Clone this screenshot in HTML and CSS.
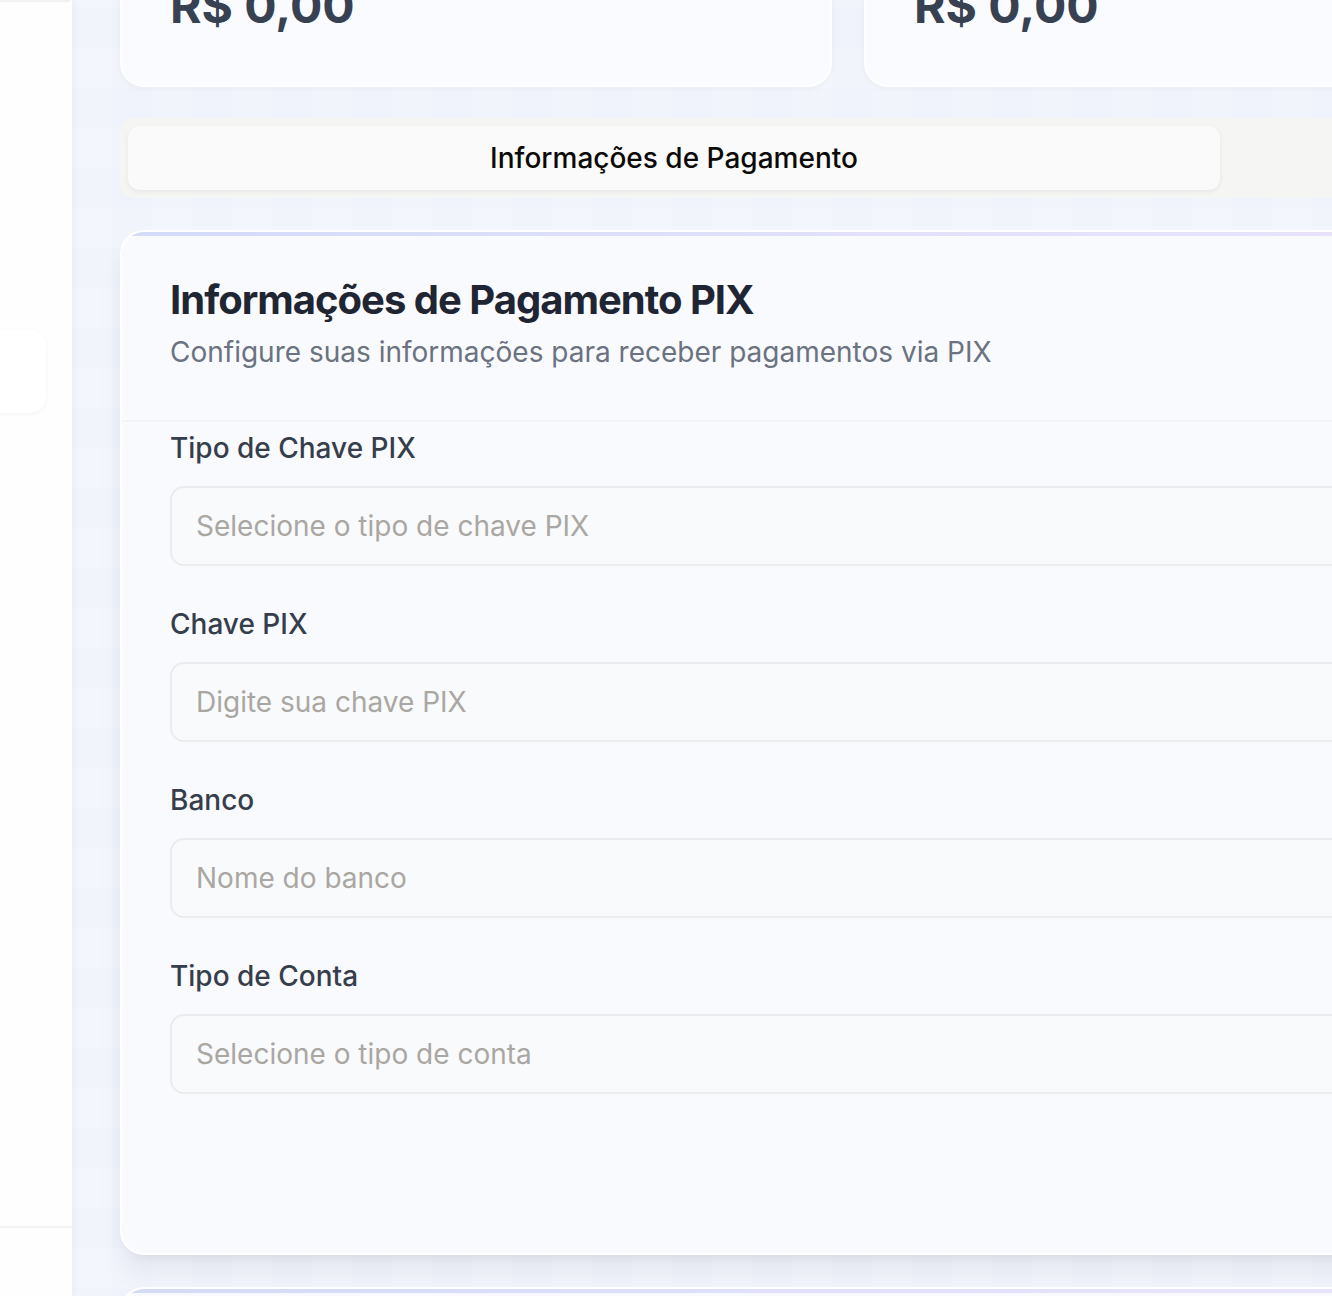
FILE: index.html
```html
<!DOCTYPE html>
<html lang="pt-BR">
<head>
<meta charset="utf-8">
<title>Informações de Pagamento</title>
<link rel="stylesheet" href="styles.css">
</head>
<body>
<div class="app">
  <aside class="sidebar">
    <div class="side-top"></div>
    <div class="side-nav">
      <div class="side-card"></div>
    </div>
    <div class="side-foot"></div>
  </aside>
  <main class="main">
    <div class="content">
      <section class="stats">
        <div class="stat-card"><div class="stat-value">R$ 0,00</div></div>
        <div class="stat-card"><div class="stat-value">R$ 0,00</div></div>
      </section>
      <div class="tabs">
        <div class="tab active">Informações de Pagamento</div>
        <div class="tab"></div>
      </div>
      <section class="card">
        <header class="card-head">
          <h2 class="card-title">Informações de Pagamento PIX</h2>
          <p class="card-desc">Configure suas informações para receber pagamentos via PIX</p>
        </header>
        <div class="card-body">
          <div class="field">
            <label class="label">Tipo de Chave PIX</label>
            <div class="input placeholder">Selecione o tipo de chave PIX</div>
          </div>
          <div class="field">
            <label class="label">Chave PIX</label>
            <div class="input placeholder">Digite sua chave PIX</div>
          </div>
          <div class="field">
            <label class="label">Banco</label>
            <div class="input placeholder">Nome do banco</div>
          </div>
          <div class="field">
            <label class="label">Tipo de Conta</label>
            <div class="input placeholder">Selecione o tipo de conta</div>
          </div>
        </div>
      </section>
      <section class="card next-card"></section>
    </div>
  </main>
</div>
</body>
</html>
```

FILE: styles.css
```css
* { box-sizing: border-box; }
html, body { margin: 0; padding: 0; }
body {
  font-family: Inter, "Noto Sans", "Liberation Sans", sans-serif;
  width: 1332px;
  height: 1296px;
  overflow: hidden;
  background: #f1f4fb;
}
.app {
  display: flex;
  height: 1296px;
  overflow: hidden;
}
.sidebar {
  flex: none;
  width: 72px;
  height: 1296px;
  background: #fefefe;
  display: flex;
  flex-direction: column;
  box-shadow: 2px 0 8px rgba(30, 40, 80, 0.05);
  position: relative;
  z-index: 2;
}
.side-top {
  height: 2px;
  margin-right: 2px;
  background: #f1f2f4;
}
.side-nav {
  flex: 1;
  padding-top: 328px;
}
.side-card {
  width: 66px;
  height: 83px;
  margin-left: -20px;
  background: #ffffff;
  border-radius: 16px;
  box-shadow: 0 1px 4px rgba(0, 0, 0, 0.05);
}
.side-foot {
  height: 70px;
  border-top: 2px solid #f3f4f6;
}
.main {
  flex: none;
  width: 2400px;
  height: 1296px;
  padding-left: 48px;
  background-color: #f1f4fb;
  background-image:
    linear-gradient(90deg, rgba(255, 255, 255, 0.14) 50%, rgba(255, 255, 255, 0) 50%),
    linear-gradient(rgba(120, 150, 230, 0.015) 50%, rgba(120, 150, 230, 0) 50%);
  background-size: 80px 80px, 80px 80px;
  background-position: 0 8px, 0 8px;
}
.content {
  width: 2200px;
  margin-top: -68px;
}
.stats {
  display: grid;
  grid-template-columns: 712px 712px;
  gap: 32px;
}
.stat-card {
  border: 2px solid rgba(255, 255, 255, 0.8);
  border-radius: 24px;
  background: #f9fbfe;
  padding: 48px 48px 55px;
  box-shadow: 0 2px 6px rgba(20, 30, 60, 0.04);
}
.stat-value {
  font-size: 48px;
  line-height: 48px;
  font-weight: 700;
  color: #374151;
}
.tabs {
  margin-top: 31px;
  height: 80px;
  padding: 8px;
  border-radius: 14px;
  background: #f5f5f3;
  display: grid;
  grid-template-columns: 1fr 1fr;
}
.tab {
  height: 64px;
  border-radius: 12px;
  display: flex;
  align-items: center;
  justify-content: center;
  font-size: 28px;
  font-weight: 500;
  color: #0c0a09;
}
.tab.active {
  background: #fafafa;
  box-shadow: 0 2px 5px rgba(0, 0, 0, 0.06);
}
.card {
  margin-top: 32px;
  position: relative;
  overflow: hidden;
  border: 2px solid rgba(255, 255, 255, 0.9);
  border-radius: 24px;
  background: #f9fafd;
  box-shadow: 0 20px 30px -6px rgba(20, 30, 60, 0.08), 0 8px 12px -8px rgba(20, 30, 60, 0.08);
}
.card::before {
  content: "";
  position: absolute;
  left: 0;
  right: 0;
  top: 0;
  height: 4px;
  background: linear-gradient(90deg, #d3dbf7 0%, #e2e1f9 35%, #ebe4fa 70%, #ede4f9 100%);
}
.card-head {
  padding: 48px 48px 48px;
  border-bottom: 2px solid #f3f4f8;
}
.card-title {
  margin: 0;
  font-size: 40px;
  line-height: 40px;
  font-weight: 700;
  letter-spacing: -0.025em;
  color: #1f2532;
}
.card-desc {
  margin: 12px 0 0;
  font-size: 28px;
  line-height: 40px;
  color: #6b7280;
}
.card-body {
  padding: 12px 48px 159px;
  display: flex;
  flex-direction: column;
  gap: 44px;
}
.field {
  display: flex;
  flex-direction: column;
  gap: 24px;
}
.label {
  font-size: 28px;
  line-height: 28px;
  font-weight: 500;
  color: #363d4b;
}
.input {
  height: 80px;
  border: 2px solid #ececee;
  border-radius: 14px;
  background: #f9fafc;
  padding: 0 24px;
  display: flex;
  align-items: center;
  font-size: 28px;
}
.placeholder { color: #aaa7a3; }
.next-card {
  height: 200px;
}
```
